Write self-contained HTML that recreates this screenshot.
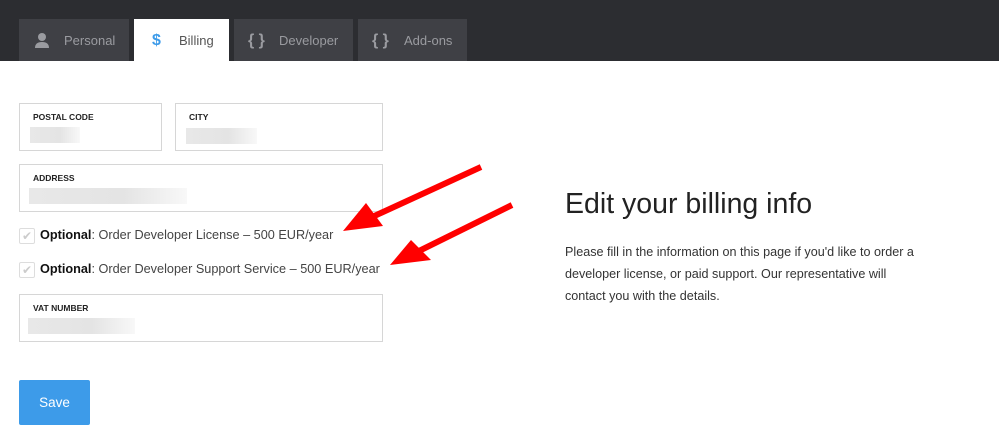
<!DOCTYPE html>
<html><head><style>
body{margin:0;width:999px;height:437px;background:#fff;font-family:"Liberation Sans",sans-serif;position:relative;overflow:hidden}
.top{position:absolute;left:0;top:0;width:999px;height:61px;background:#2c2d31}
.tab{position:absolute;top:19px;height:42px;background:#3f4045;color:#9a9ba0;font-size:13px;line-height:44px;box-sizing:border-box}
.tab .ic{position:absolute;top:0}
.tab .t{position:absolute;top:0}
.f{position:absolute;border:1px solid #d6d6d6;box-sizing:border-box;background:#fff}
.f .l{position:absolute;left:13px;top:8px;font-size:8.5px;font-weight:bold;color:#222}
.f .b{position:absolute;height:16px;background:linear-gradient(90deg,#e8e8e8,#e4e4e4 60%,#f8f8f8)}
.cb{position:absolute;left:19px;width:16px;height:16px;border:1px solid #ddd;border-radius:2px;box-sizing:border-box;color:#ccc;font-size:12px;line-height:15px;text-align:center}
.ct{position:absolute;left:40px;font-size:12.7px;color:#444}
.ct b{color:#111}
</style></head><body>
<div class="top"></div>
<div class="tab" style="left:19px;width:110px"><svg style="position:absolute;left:15px;top:13px" width="16" height="16" viewBox="0 0 16 16"><circle cx="8" cy="5" r="4" fill="#9a9ba0"/><path d="M1 16 Q1 10 8 10 Q15 10 15 16Z" fill="#9a9ba0"/></svg><span class="t" style="left:45px">Personal</span></div>
<div class="tab" style="left:134px;width:95px;background:#fff;color:#555;height:43px"><span class="ic" style="left:18px;color:#3d9be9;font-weight:bold;font-size:16px">$</span><span class="t" style="left:45px">Billing</span></div>
<div class="tab" style="left:234px;width:119px"><span class="ic" style="left:14px;font-size:16px;font-weight:bold">{ }</span><span class="t" style="left:45px">Developer</span></div>
<div class="tab" style="left:358px;width:109px"><span class="ic" style="left:14px;font-size:16px;font-weight:bold">{ }</span><span class="t" style="left:46px">Add-ons</span></div>

<div class="f" style="left:19px;top:103px;width:143px;height:48px"><div class="l">POSTAL CODE</div><div class="b" style="left:10px;top:23px;width:50px"></div></div>
<div class="f" style="left:175px;top:103px;width:208px;height:48px"><div class="l">CITY</div><div class="b" style="left:10px;top:24px;width:71px"></div></div>
<div class="f" style="left:19px;top:164px;width:364px;height:48px"><div class="l">ADDRESS</div><div class="b" style="left:9px;top:23px;width:158px"></div></div>
<div class="cb" style="top:228px">✔</div><div class="ct" style="top:228px"><b>Optional</b>: Order Developer License – 500 EUR/year</div>
<div class="cb" style="top:262px">✔</div><div class="ct" style="top:262px"><b>Optional</b>: Order Developer Support Service – 500 EUR/year</div>
<div class="f" style="left:19px;top:294px;width:364px;height:48px"><div class="l">VAT NUMBER</div><div class="b" style="left:8px;top:23px;width:107px"></div></div>
<div style="position:absolute;left:19px;top:380px;width:71px;height:45px;background:#3d9be9;border-radius:2px;color:#fff;font-size:13.5px;line-height:45px;text-align:center">Save</div>

<svg style="position:absolute;left:0;top:0" width="999" height="437">
<g fill="#f00" stroke="#f00">
<line x1="481" y1="167" x2="370" y2="218" stroke-width="6"/>
<polygon points="343,231 366,203 383,226" stroke="none"/>
<line x1="512" y1="205" x2="415" y2="253" stroke-width="6"/>
<polygon points="390,265 411,240 431,260" stroke="none"/>
</g></svg>

<div style="position:absolute;left:565px;top:188px;font-size:28.5px;color:#222">Edit your billing info</div>
<div style="position:absolute;left:565px;top:241px;width:365px;font-size:12.6px;line-height:22px;color:#333">Please fill in the information on this page if you'd like to order a developer license, or paid support. Our representative will contact you with the details.</div>
</body></html>
